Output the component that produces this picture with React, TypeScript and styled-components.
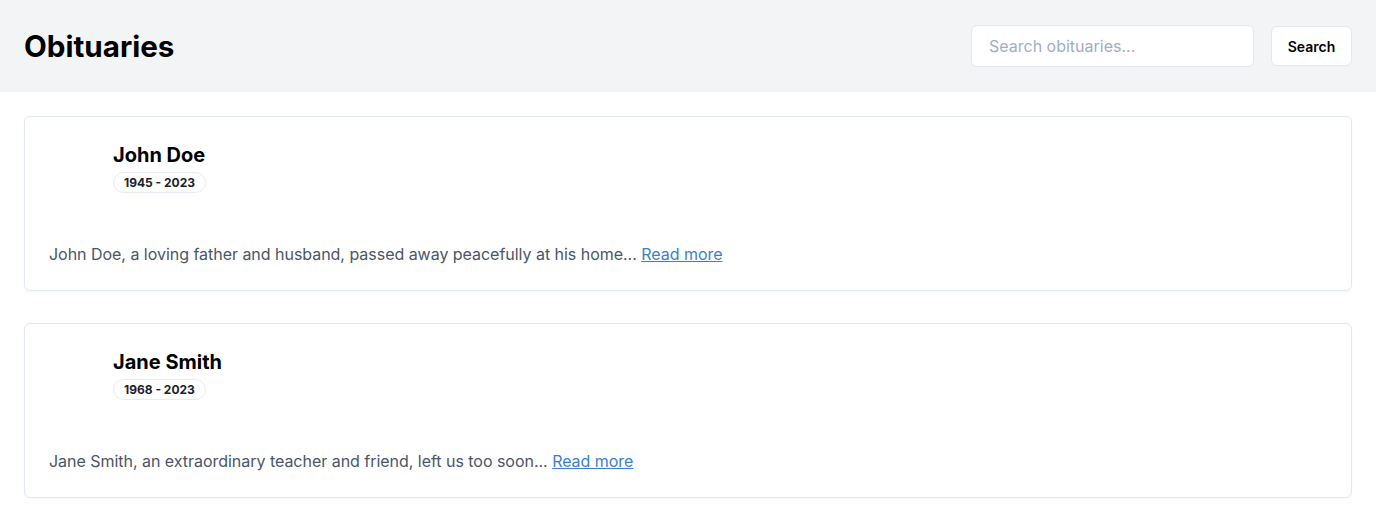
import React from "react";
import styled, { createGlobalStyle } from "styled-components";

const GlobalStyle = createGlobalStyle`
    body {
        margin: 0;
        font-family: Inter, "Noto Sans", sans-serif;
        background-color: #FFFFFF;
        color: #1A202C;
    }
`
const Header = styled.header`
    display: flex;
    align-items: center;
    justify-content: space-between;
    height: 92px;
    padding: 0 24px;
    box-sizing: border-box;
    background-color: #F3F4F6;
`
const Title = styled.h1`
    margin: 0;
    font-size: 29.6px;
    line-height: 36px;
    font-weight: 700;
    color: #000000;
`
const SearchForm = styled.form`
    display: flex;
    align-items: center;
    gap: 17px;
`
const SearchInput = styled.input`
    width: 283px;
    height: 42px;
    box-sizing: border-box;
    padding: 0 17px;
    border: 1px solid #E2E8F0;
    border-radius: 6px;
    background-color: #FFFFFF;
    font-family: inherit;
    font-size: 16px;
    color: #1A202C;
    outline: none;
    &::placeholder {
        color: #A0AEC0;
    }
`
const SearchButton = styled.button`
    width: 81px;
    height: 40px;
    border: 1px solid #E2E8F0;
    border-radius: 6px;
    background-color: #FFFFFF;
    font-family: inherit;
    font-size: 14px;
    font-weight: 600;
    color: #000000;
`
const List = styled.main`
    display: flex;
    flex-direction: column;
    gap: 32px;
    padding: 24px;
`
const Card = styled.article`
    border: 1px solid #E2E8F0;
    border-radius: 6px;
    padding: 24px;
    background-color: #FFFFFF;
    box-shadow: 0 1px 2px rgba(0, 0, 0, 0.03);
`
const CardHeader = styled.div`
    display: flex;
    gap: 16px;
    height: 77px;
`
const Avatar = styled.div`
    width: 48px;
    height: 48px;
    flex-shrink: 0;
`
const Name = styled.h2`
    margin: 0;
    font-size: 20px;
    line-height: 28px;
    font-weight: 700;
    color: #000000;
`
const Years = styled.span`
    display: inline-block;
    margin-top: 3px;
    padding: 0 10px;
    height: 21px;
    line-height: 19px;
    box-sizing: border-box;
    border: 1px solid #E8EBEF;
    border-radius: 999px;
    font-size: 12px;
    font-weight: 700;
    color: #1A202C;
`
const Summary = styled.p`
    margin: 24px 0 0;
    font-size: 16px;
    line-height: 24px;
    letter-spacing: -0.03px;
    color: #4A5568;
`
const ReadMore = styled.a`
    color: #3B7FCB;
    text-decoration: underline;
`

const obituaries = [
  {
    name: "John Doe",
    years: "1945 - 2023",
    summary: "John Doe, a loving father and husband, passed away peacefully at his home...",
  },
  {
    name: "Jane Smith",
    years: "1968 - 2023",
    summary: "Jane Smith, an extraordinary teacher and friend, left us too soon...",
  },
];

const App: React.FC = () => {
  return (
    <>
      <GlobalStyle />
      <Header>
        <Title>Obituaries</Title>
        <SearchForm onSubmit={(e) => e.preventDefault()}>
          <SearchInput placeholder="Search obituaries..." />
          <SearchButton type="submit">Search</SearchButton>
        </SearchForm>
      </Header>
      <List>
        {obituaries.map((item) => (
          <Card key={item.name}>
            <CardHeader>
              <Avatar />
              <div>
                <Name>{item.name}</Name>
                <Years>{item.years}</Years>
              </div>
            </CardHeader>
            <Summary>
              {item.summary} <ReadMore href="#">Read more</ReadMore>
            </Summary>
          </Card>
        ))}
      </List>
    </>
  );
};

export default App;
